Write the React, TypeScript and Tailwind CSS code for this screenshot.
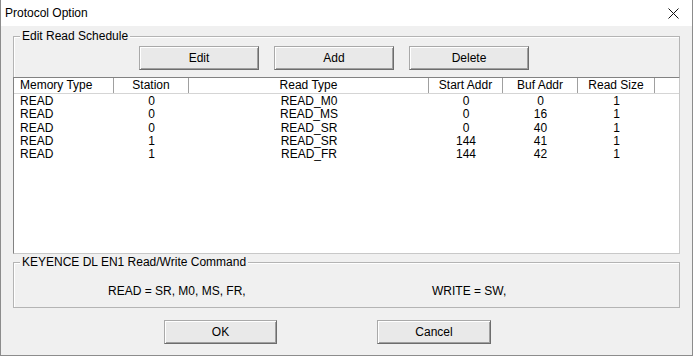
import { type ReactNode } from "react"

const columns = [
  { label: "Memory Type", width: "w-[100px]", align: "text-left pl-[6px]" },
  { label: "Station", width: "w-[75px]", align: "text-center" },
  { label: "Read Type", width: "w-[240px]", align: "text-center" },
  { label: "Start Addr", width: "w-[74px]", align: "text-center" },
  { label: "Buf Addr", width: "w-[75px]", align: "text-center" },
  { label: "Read Size", width: "w-[77px]", align: "text-center" },
]

const rows = [
  ["READ", "0", "READ_M0", "0", "0", "1"],
  ["READ", "0", "READ_MS", "0", "16", "1"],
  ["READ", "0", "READ_SR", "0", "40", "1"],
  ["READ", "1", "READ_SR", "144", "41", "1"],
  ["READ", "1", "READ_FR", "144", "42", "1"],
]

function WinButton({ children, width }: { children: ReactNode; width: string }) {
  return (
    <button
      className={`${width} h-[24px] bg-[#e9e9e9] border border-t-[#a9a9a9] border-l-[#a9a9a9] border-r-[#6d6d6d] border-b-[#6d6d6d] shadow-[inset_1px_1px_0_#ffffff,inset_-1px_-1px_0_#a0a0a0] text-[12px] leading-none text-black`}
    >
      {children}
    </button>
  )
}

function GroupLabel({ children }: { children: ReactNode }) {
  return (
    <span className="absolute -top-[8px] left-[6px] bg-[#f0f0f0] px-[2px] text-[12px] leading-[14px] text-black">
      {children}
    </span>
  )
}

export default function App() {
  return (
    <div
      className="w-[693px] h-[356px] bg-[#f0f0f0] border-l border-r border-b border-[#8c8c8c] flex flex-col overflow-hidden text-black"
      style={{ fontFamily: '"Liberation Sans", Arial, sans-serif' }}
    >
      {/* title bar */}
      <div className="h-[26px] bg-white flex items-center justify-between pl-[4px] pr-[13px] shrink-0">
        <span className="text-[12px]">Protocol Option</span>
        <svg width="11" height="11" viewBox="0 0 11 11" className="mt-[1px]">
          <path d="M0.5 0.5 L10.5 10.5 M10.5 0.5 L0.5 10.5" stroke="#111" strokeWidth="1" fill="none" />
        </svg>
      </div>

      <div className="flex flex-col px-[12px]">
        {/* Edit Read Schedule */}
        <div className="relative mt-[10px] h-[218px] flex flex-col border-t border-l border-r border-[#b4b4b4] shadow-[inset_1px_1px_0_#ffffff]">
          <GroupLabel>Edit Read Schedule</GroupLabel>

          <div className="flex gap-[15px] pl-[125px] mt-[9px]">
            <WinButton width="w-[120px]">Edit</WinButton>
            <WinButton width="w-[120px]">Add</WinButton>
            <WinButton width="w-[120px]">Delete</WinButton>
          </div>

          {/* list view */}
          <div className="-mx-px mt-[7px] flex-1 bg-white border border-t-[#828282] border-l-[#828282] border-r-[#c8c8c8] border-b-[#c8c8c8] text-[12px] overflow-hidden">
            <div className="flex h-[16px] border-b border-[#d5d5d5]">
              {columns.map((c) => (
                <div
                  key={c.label}
                  className={`${c.width} ${c.align} shrink-0 border-r border-[#a0a0a0] leading-[15px]`}
                >
                  {c.label}
                </div>
              ))}
              <div className="flex-1" />
            </div>
            <div className="pt-px">
              {rows.map((r, i) => (
                <div key={i} className="flex h-[13.33px] leading-[13px]">
                  {r.map((cell, j) => (
                    <div key={j} className={`${columns[j].width} ${columns[j].align} shrink-0`}>
                      {cell}
                    </div>
                  ))}
                </div>
              ))}
            </div>
          </div>
        </div>

        {/* Command group */}
        <div className="relative mt-[8px] h-[46px] border border-[#b4b4b4] shadow-[inset_1px_1px_0_#ffffff] flex items-center pt-[11px] text-[12px]">
          <GroupLabel>KEYENCE DL EN1 Read/Write Command</GroupLabel>
          <span className="w-[418px] pl-[94px] shrink-0">READ = SR, M0, MS, FR,</span>
          <span>WRITE = SW,</span>
        </div>

        {/* OK / Cancel */}
        <div className="flex gap-[100px] pl-[151px] mt-[12px]">
          <WinButton width="w-[113px]">OK</WinButton>
          <WinButton width="w-[114px]">Cancel</WinButton>
        </div>
      </div>
    </div>
  )
}
